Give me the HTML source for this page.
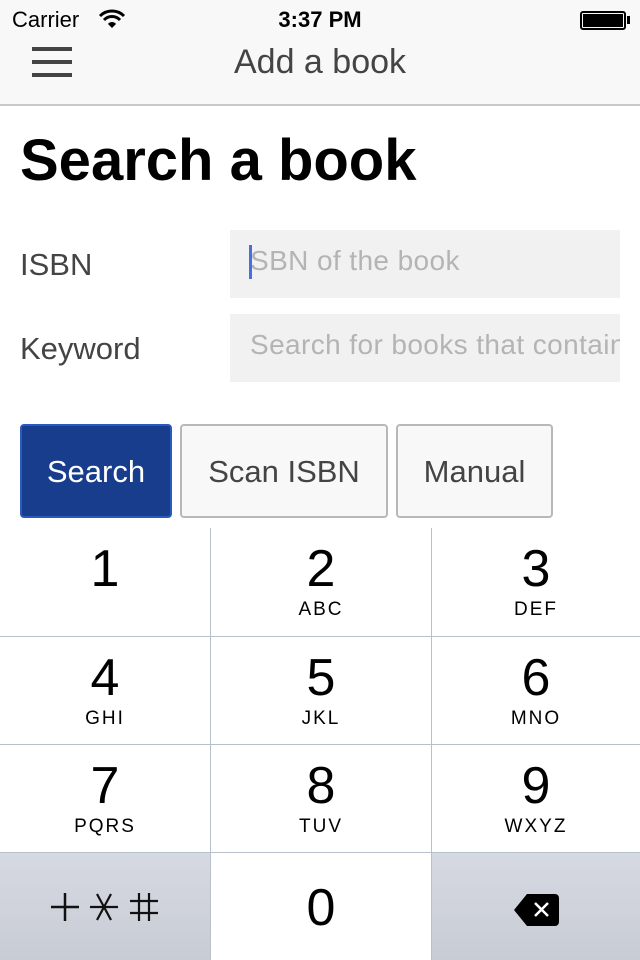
<!DOCTYPE html>
<html><head><style>
*{margin:0;padding:0;box-sizing:border-box}
body{width:640px;height:960px;background:#fff;font-family:"Liberation Sans",sans-serif;position:relative;overflow:hidden}
.a{position:absolute}
.nav{left:0;top:0;width:640px;height:106px;background:#f8f8f8;border-bottom:2px solid #c8c8c8}
.field{background:#f1f1f1;height:68px;left:230px;width:390px;font-size:28px;letter-spacing:0.4px;color:#b4b4b4;line-height:62px;padding-left:20px;white-space:nowrap;overflow:hidden}
.lbl{font-size:31px;color:#444;left:20px}
.btn{top:424px;height:94px;border:2px solid #b8b8b8;border-radius:4px;background:#f8f8f8;font-size:31px;color:#444;text-align:center;line-height:92px}
.key{height:108px;text-align:center;border-left:1px solid #b8c0cc;border-top:1px solid #b8c0cc}
.d{font-size:52px;font-weight:300;color:#000;margin-top:12px;line-height:58px}
.l{font-size:19px;letter-spacing:2px;color:#000;line-height:24px}
.g{background:linear-gradient(#d6d9e1,#c8ccd5)}
</style></head><body>
<div class="a nav"></div>
<div class="a" style="left:12px;top:7px;font-size:22px">Carrier</div>
<svg class="a" style="left:98px;top:9px" width="28" height="20" viewBox="0 0 28 20"><path d="M2 7a17 17 0 0 1 24 0" stroke="#000" stroke-width="3" fill="none"/><path d="M6 11a11 11 0 0 1 16 0" stroke="#000" stroke-width="3" fill="none"/><path d="M10 15a5 5 0 0 1 8 0L14 19z" fill="#000"/></svg>
<div class="a" style="left:0;width:640px;text-align:center;top:7px;font-size:22px;font-weight:bold">3:37 PM</div>
<div class="a" style="left:580px;top:11px;width:46px;height:19px;border:2px solid #000;border-radius:3px;padding:1px"><div style="background:#000;width:100%;height:100%"></div></div>
<div class="a" style="left:627px;top:16px;width:3px;height:8px;background:#000"></div>
<div class="a" style="left:32px;top:47px;width:40px;height:4px;background:#444"></div>
<div class="a" style="left:32px;top:60px;width:40px;height:4px;background:#444"></div>
<div class="a" style="left:32px;top:73px;width:40px;height:4px;background:#444"></div>
<div class="a" style="left:0;width:640px;text-align:center;top:43px;font-size:34px;color:#444">Add a book</div>
<div class="a" style="left:20px;top:127px;font-size:58px;font-weight:bold;color:#000">Search a book</div>
<div class="a lbl" style="top:247px">ISBN</div>
<div class="a lbl" style="top:331px">Keyword</div>
<div class="a field" style="top:230px">SBN of the book</div>
<div class="a" style="left:249px;top:245px;width:3px;height:34px;background:#4a6ee0"></div>
<div class="a field" style="top:314px">Search for books that contain</div>
<div class="a btn" style="left:20px;width:152px;background:#173d8c;border-color:#2a5ac0;color:#fff">Search</div>
<div class="a btn" style="left:180px;width:208px">Scan ISBN</div>
<div class="a btn" style="left:396px;width:157px">Manual</div>
<div class="a" style="left:0;top:528px;width:640px;height:432px;display:grid;grid-template-columns:210px 221px 209px;grid-template-rows:108px 108px 108px 108px">
<div class="key" style="border-top:none;border-left:none"><div class="d">1</div></div>
<div class="key" style="border-top:none"><div class="d">2</div><div class="l">ABC</div></div>
<div class="key" style="border-top:none"><div class="d">3</div><div class="l">DEF</div></div>
<div class="key" style="border-left:none"><div class="d">4</div><div class="l">GHI</div></div>
<div class="key"><div class="d">5</div><div class="l">JKL</div></div>
<div class="key"><div class="d">6</div><div class="l">MNO</div></div>
<div class="key" style="border-left:none"><div class="d">7</div><div class="l">PQRS</div></div>
<div class="key"><div class="d">8</div><div class="l">TUV</div></div>
<div class="key"><div class="d">9</div><div class="l">WXYZ</div></div>
<div class="key g" style="border-left:none"><svg style="margin-top:38px" width="110" height="32" viewBox="0 0 110 32"><path d="M1 16H29M15 2V30" stroke="#111" stroke-width="2.5"/><path d="M40 16H68M47 3L61 29M61 3L47 29" stroke="#111" stroke-width="2.2"/><path d="M80 10H108M80 22H108M89 2V30M99 2V30" stroke="#111" stroke-width="2.2"/></svg></div>
<div class="key"><div class="d" style="margin-top:26px">0</div></div>
<div class="key g"><svg style="margin-top:40px" width="46" height="34" viewBox="0 0 46 34"><path d="M14 1H42a4 4 0 0 1 4 4V29a4 4 0 0 1-4 4H14L1 17z" fill="#000"/><path d="M22 10l13 13M35 10L22 23" stroke="#fff" stroke-width="2.5"/></svg></div>
</div>
</body></html>
